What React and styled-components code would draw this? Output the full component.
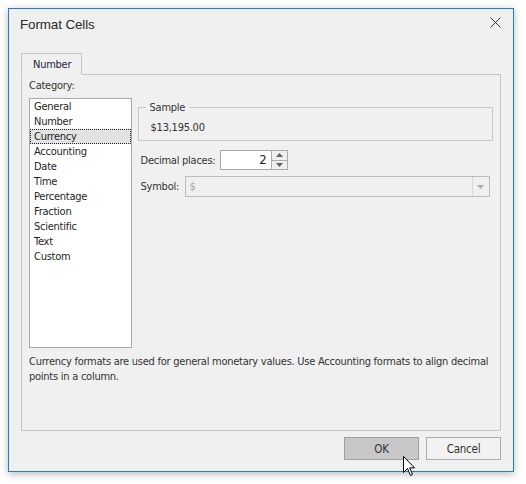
import React from "react";
import styled, { createGlobalStyle } from "styled-components";

const Global = createGlobalStyle`
  html, body { margin: 0; padding: 0; background: #ffffff; }
  body {
    font-family: "DejaVu Sans Condensed", "Liberation Sans", Arial, sans-serif;
    font-size: 11px;
    letter-spacing: -0.25px;
    color: #1e1e1e;
  }
  * { box-sizing: border-box; }
`;

const Page = styled.div`
  width: 526px;
  height: 484px;
  padding: 8px 0 0 8px;
`;

const Window = styled.div`
  position: relative;
  width: 506px;
  height: 464px;
  border: 1px solid #1a7fd4;
  background: #f0f0f0;
  box-shadow: 0 2px 8px rgba(0, 0, 0, 0.28);
  display: flex;
  flex-direction: column;
`;

const TitleBar = styled.div`
  height: 30px;
  display: flex;
  align-items: center;
  justify-content: space-between;
  padding: 0 12px 0 11px;
`;

const Title = styled.span`
  font-family: "Liberation Sans", Arial, sans-serif;
  font-size: 13.4px;
  letter-spacing: -0.1px;
  color: #2a2a2a;
`;

const CloseBtn = styled.div`
  width: 12px;
  height: 12px;
  display: flex;
  align-items: center;
  justify-content: center;
  margin-top: -3px;
`;

const Body = styled.div`
  flex: 1;
  display: flex;
  flex-direction: column;
  padding: 14px 12px 11px 12px;
`;

const TabStrip = styled.div`
  display: flex;
  margin-bottom: -1px;
  position: relative;
  z-index: 1;
`;

const Tab = styled.div`
  width: 61px;
  height: 22px;
  border: 1px solid #c6c6c6;
  border-bottom: 1px solid #f0f0f0;
  background: #f0f0f0;
  display: flex;
  align-items: center;
  padding-left: 11px;
  color: #1e1e3a;
`;

const Panel = styled.div`
  height: 357px;
  border: 1px solid #c6c6c6;
  padding: 3px 7px 0 7px;
  display: flex;
  flex-direction: column;
`;

const Caption = styled.div`
  line-height: 15px;
  height: 15px;
  color: #333333;
`;

const Row = styled.div`
  display: flex;
  gap: 6px;
  margin-top: 5px;
`;

const ListBox = styled.div`
  width: 103px;
  height: 250px;
  background: #ffffff;
  border: 1px solid #a9a9a9;
  display: flex;
  flex-direction: column;
`;

const ListItem = styled.div`
  height: 15px;
  line-height: 13px;
  padding-left: 3px;
  color: #1e1e1e;
  border: 1px ${(p) => (p.$selected ? "dotted #222" : "solid transparent")};
  background: ${(p) => (p.$selected ? "#e3e3e3" : "transparent")};
`;

const RightCol = styled.div`
  width: 357px;
  display: flex;
  flex-direction: column;
`;

const Group = styled.div`
  position: relative;
  margin-top: 9px;
  height: 34px;
  border: 1px solid #c8c8c8;
  padding: 12px 12px 4px 12px;
  line-height: 15px;
  color: #333333;
`;

const GroupLabel = styled.span`
  position: absolute;
  top: -8px;
  left: 7px;
  padding: 0 4px;
  line-height: 15px;
  background: #f0f0f0;
  color: #333333;
`;

const FieldRow = styled.div`
  display: flex;
  align-items: center;
  margin-top: ${(p) => p.$mt}px;
  padding-left: 3px;
`;

const FieldLabel = styled.span`
  width: ${(p) => p.$w}px;
  color: #333333;
`;

const SpinBox = styled.div`
  display: flex;
  height: 20px;
`;

const SpinInput = styled.div`
  width: 52px;
  height: 20px;
  border: 1px solid #a9a9a9;
  background: #ffffff;
  text-align: right;
  padding-right: 4px;
  font-size: 13px;
  line-height: 18px;
  color: #1e1e1e;
`;

const SpinButtons = styled.div`
  width: 17px;
  height: 20px;
  display: flex;
  flex-direction: column;
  margin-left: -1px;
`;

const SpinButton = styled.div`
  flex: 1;
  border: 1px solid #ababab;
  background: #efefef;
  display: flex;
  align-items: center;
  justify-content: center;
  ${(p) => (p.$down ? "margin-top: -1px;" : "")}
`;

const Combo = styled.div`
  width: 305px;
  height: 21px;
  border: 1px solid #bcbcbc;
  background: #f0f0f0;
  display: flex;
  align-items: center;
`;

const ComboText = styled.span`
  flex: 1;
  padding-left: 4px;
  color: #a8a8a8;
`;

const ComboButton = styled.div`
  width: 17px;
  height: 100%;
  border-left: 1px solid #d8d8d8;
  display: flex;
  align-items: center;
  justify-content: center;
`;

const Description = styled.div`
  margin-top: 6px;
  line-height: 15px;
  color: #333333;
  white-space: nowrap;
`;

const Footer = styled.div`
  display: flex;
  justify-content: flex-end;
  gap: 7px;
  margin-top: 6px;
`;

const Button = styled.div`
  width: 75px;
  height: 23px;
  display: flex;
  align-items: center;
  justify-content: center;
  border: 1px solid ${(p) => (p.$hover ? "#a0a0a0" : "#adadad")};
  background: ${(p) => (p.$hover ? "#c8c8c8" : "#f2f2f2")};
  color: #333333;
  font-size: 11.5px;
`;

const Cursor = styled.svg`
  position: absolute;
  left: 394px;
  top: 447px;
  pointer-events: none;
`;

const Tri = ({ dir, color }) => (
  <svg width="7" height="4" viewBox="0 0 7 4">
    {dir === "up" ? (
      <path d="M0 4 L3.5 0 L7 4 Z" fill={color} />
    ) : (
      <path d="M0 0 L7 0 L3.5 4 Z" fill={color} />
    )}
  </svg>
);

const items = [
  "General",
  "Number",
  "Currency",
  "Accounting",
  "Date",
  "Time",
  "Percentage",
  "Fraction",
  "Scientific",
  "Text",
  "Custom",
];

export default function App() {
  return (
    <>
      <Global />
      <Page>
        <Window>
          <TitleBar>
            <Title>Format Cells</Title>
            <CloseBtn>
              <svg width="11" height="11" viewBox="0 0 11 11">
                <path d="M0.5 0.5 L10.5 10.5 M10.5 0.5 L0.5 10.5" stroke="#333" strokeWidth="1" />
              </svg>
            </CloseBtn>
          </TitleBar>
          <Body>
            <TabStrip>
              <Tab>Number</Tab>
            </TabStrip>
            <Panel>
              <Caption>Category:</Caption>
              <Row>
                <ListBox>
                  {items.map((it) => (
                    <ListItem key={it} $selected={it === "Currency"}>
                      {it}
                    </ListItem>
                  ))}
                </ListBox>
                <RightCol>
                  <Group>
                    <GroupLabel>Sample</GroupLabel>
                    $13,195.00
                  </Group>
                  <FieldRow $mt={9}>
                    <FieldLabel $w={79}>Decimal places:</FieldLabel>
                    <SpinBox>
                      <SpinInput>2</SpinInput>
                      <SpinButtons>
                        <SpinButton>
                          <Tri dir="up" color="#606060" />
                        </SpinButton>
                        <SpinButton $down>
                          <Tri dir="down" color="#606060" />
                        </SpinButton>
                      </SpinButtons>
                    </SpinBox>
                  </FieldRow>
                  <FieldRow $mt={6}>
                    <FieldLabel $w={44}>Symbol:</FieldLabel>
                    <Combo>
                      <ComboText>$</ComboText>
                      <ComboButton>
                        <Tri dir="down" color="#a8a8a8" />
                      </ComboButton>
                    </Combo>
                  </FieldRow>
                </RightCol>
              </Row>
              <Description>
                Currency formats are used for general monetary values. Use Accounting formats to align decimal
                <br />
                points in a column.
              </Description>
            </Panel>
            <Footer>
              <Button $hover>OK</Button>
              <Button>Cancel</Button>
            </Footer>
          </Body>
          <Cursor width="13" height="21" viewBox="0 0 13 21">
            <path
              d="M0.5 0.5 L0.5 16.5 L4.5 12.5 L7.5 19.5 L9.5 18.5 L6.7 11.8 L11.5 11.8 Z"
              fill="#ffffff"
              stroke="#000000"
              strokeWidth="1"
              strokeLinejoin="miter"
            />
          </Cursor>
        </Window>
      </Page>
    </>
  );
}
